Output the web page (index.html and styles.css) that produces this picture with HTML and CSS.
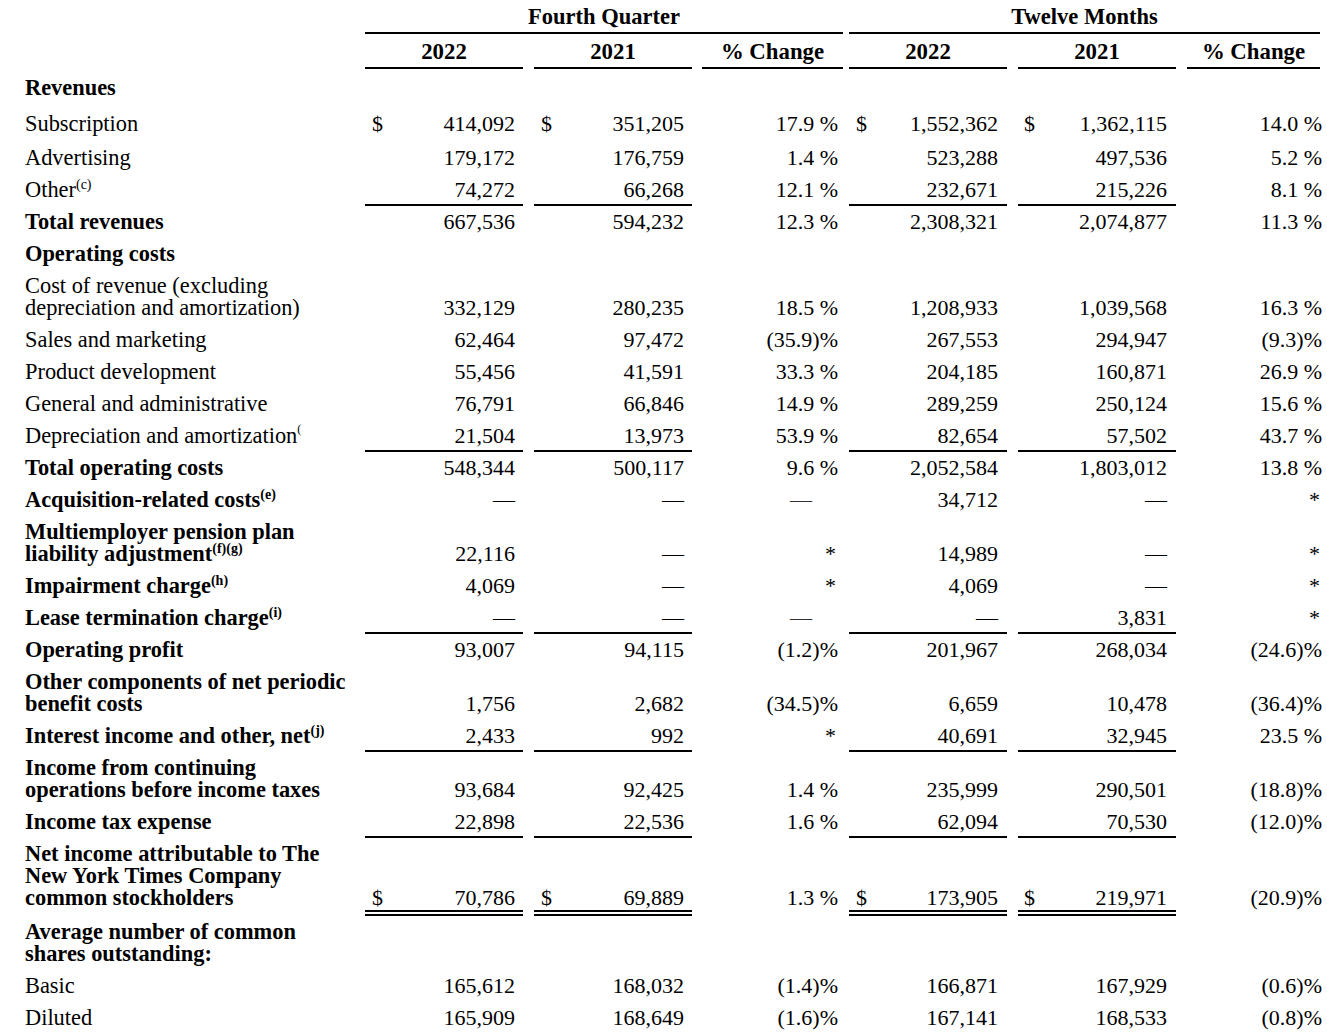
FILE: index.html
```html
<!DOCTYPE html>
<html lang="en">
<head>
<meta charset="utf-8">
<title>Statement of Operations</title>
<link rel="stylesheet" href="styles.css">
</head>
<body>
<div class="sheet">
  <div class="hrow1">
    <div></div>
    <div class="hq">Fourth Quarter</div>
    <div class="ht">Twelve Months</div>
  </div>
  <div class="r hrow2">
    <div></div>
    <div>2022</div><div>2021</div><div>% Change</div>
    <div>2022</div><div>2021</div><div>% Change</div>
  </div>

  <div class="r rev"><div class="lb b">Revenues</div><div></div><div></div><div></div><div></div><div></div><div></div></div>
  <div class="r sub">
    <div class="lb">Subscription</div>
    <div class="n"><span class="d">$</span>414,092</div>
    <div class="n"><span class="d">$</span>351,205</div>
    <div class="n">17.9 %</div>
    <div class="n"><span class="d">$</span>1,552,362</div>
    <div class="n"><span class="d">$</span>1,362,115</div>
    <div class="n"><span class="p">14.0 %</span></div>
  </div>
  <div class="r adv">
    <div class="lb">Advertising</div>
    <div class="n">179,172</div><div class="n">176,759</div><div class="n">1.4 %</div>
    <div class="n">523,288</div><div class="n">497,536</div><div class="n"><span class="p">5.2 %</span></div>
  </div>
  <div class="r">
    <div class="lb">Other<sup>(c)</sup></div>
    <div class="n u">74,272</div><div class="n u">66,268</div><div class="n">12.1 %</div>
    <div class="n u">232,671</div><div class="n u">215,226</div><div class="n"><span class="p">8.1 %</span></div>
  </div>
  <div class="r">
    <div class="lb b">Total revenues</div>
    <div class="n">667,536</div><div class="n">594,232</div><div class="n">12.3 %</div>
    <div class="n">2,308,321</div><div class="n">2,074,877</div><div class="n"><span class="p">11.3 %</span></div>
  </div>
  <div class="r"><div class="lb b">Operating costs</div><div></div><div></div><div></div><div></div><div></div><div></div></div>
  <div class="r">
    <div class="lb">Cost of revenue (excluding<br>depreciation and amortization)</div>
    <div class="n">332,129</div><div class="n">280,235</div><div class="n">18.5 %</div>
    <div class="n">1,208,933</div><div class="n">1,039,568</div><div class="n"><span class="p">16.3 %</span></div>
  </div>
  <div class="r">
    <div class="lb">Sales and marketing</div>
    <div class="n">62,464</div><div class="n">97,472</div><div class="n">(35.9)%</div>
    <div class="n">267,553</div><div class="n">294,947</div><div class="n"><span class="p">(9.3)%</span></div>
  </div>
  <div class="r">
    <div class="lb">Product development</div>
    <div class="n">55,456</div><div class="n">41,591</div><div class="n">33.3 %</div>
    <div class="n">204,185</div><div class="n">160,871</div><div class="n"><span class="p">26.9 %</span></div>
  </div>
  <div class="r">
    <div class="lb">General and administrative</div>
    <div class="n">76,791</div><div class="n">66,846</div><div class="n">14.9 %</div>
    <div class="n">289,259</div><div class="n">250,124</div><div class="n"><span class="p">15.6 %</span></div>
  </div>
  <div class="r">
    <div class="lb">Depreciation and amortization<sup class="tick">(</sup></div>
    <div class="n u">21,504</div><div class="n u">13,973</div><div class="n">53.9 %</div>
    <div class="n u">82,654</div><div class="n u">57,502</div><div class="n"><span class="p">43.7 %</span></div>
  </div>
  <div class="r">
    <div class="lb b">Total operating costs</div>
    <div class="n">548,344</div><div class="n">500,117</div><div class="n">9.6 %</div>
    <div class="n">2,052,584</div><div class="n">1,803,012</div><div class="n"><span class="p">13.8 %</span></div>
  </div>
  <div class="r">
    <div class="lb b">Acquisition-related costs<sup>(e)</sup></div>
    <div class="n">—</div><div class="n">—</div><div class="n"><span class="pd">—</span></div>
    <div class="n">34,712</div><div class="n">—</div><div class="n"><span class="ast">*</span></div>
  </div>
  <div class="r">
    <div class="lb b">Multiemployer pension plan<br>liability adjustment<sup>(f)(g)</sup></div>
    <div class="n">22,116</div><div class="n">—</div><div class="n"><span class="a3">*</span></div>
    <div class="n">14,989</div><div class="n">—</div><div class="n"><span class="ast">*</span></div>
  </div>
  <div class="r">
    <div class="lb b">Impairment charge<sup>(h)</sup></div>
    <div class="n">4,069</div><div class="n">—</div><div class="n"><span class="a3">*</span></div>
    <div class="n">4,069</div><div class="n">—</div><div class="n"><span class="ast">*</span></div>
  </div>
  <div class="r">
    <div class="lb b">Lease termination charge<sup>(i)</sup></div>
    <div class="n u">—</div><div class="n u">—</div><div class="n"><span class="pd">—</span></div>
    <div class="n u">—</div><div class="n u">3,831</div><div class="n"><span class="ast">*</span></div>
  </div>
  <div class="r">
    <div class="lb b">Operating profit</div>
    <div class="n">93,007</div><div class="n">94,115</div><div class="n">(1.2)%</div>
    <div class="n">201,967</div><div class="n">268,034</div><div class="n"><span class="p">(24.6)%</span></div>
  </div>
  <div class="r">
    <div class="lb b">Other components of net periodic<br>benefit costs</div>
    <div class="n">1,756</div><div class="n">2,682</div><div class="n">(34.5)%</div>
    <div class="n">6,659</div><div class="n">10,478</div><div class="n"><span class="p">(36.4)%</span></div>
  </div>
  <div class="r">
    <div class="lb b">Interest income and other, net<sup>(j)</sup></div>
    <div class="n u">2,433</div><div class="n u">992</div><div class="n"><span class="a3">*</span></div>
    <div class="n u">40,691</div><div class="n u">32,945</div><div class="n"><span class="p">23.5 %</span></div>
  </div>
  <div class="r">
    <div class="lb b">Income from continuing<br>operations before income taxes</div>
    <div class="n">93,684</div><div class="n">92,425</div><div class="n">1.4 %</div>
    <div class="n">235,999</div><div class="n">290,501</div><div class="n"><span class="p">(18.8)%</span></div>
  </div>
  <div class="r">
    <div class="lb b">Income tax expense</div>
    <div class="n u">22,898</div><div class="n u">22,536</div><div class="n">1.6 %</div>
    <div class="n u">62,094</div><div class="n u">70,530</div><div class="n"><span class="p">(12.0)%</span></div>
  </div>
  <div class="r net">
    <div class="lb b">Net income attributable to The<br>New York Times Company<br>common stockholders</div>
    <div class="n uu"><span class="d">$</span>70,786</div><div class="n uu"><span class="d">$</span>69,889</div><div class="n">1.3 %</div>
    <div class="n uu"><span class="d">$</span>173,905</div><div class="n uu"><span class="d">$</span>219,971</div><div class="n"><span class="p">(20.9)%</span></div>
  </div>
  <div class="r">
    <div class="lb b">Average number of common<br>shares outstanding:</div>
    <div></div><div></div><div></div><div></div><div></div><div></div>
  </div>
  <div class="r">
    <div class="lb">Basic</div>
    <div class="n">165,612</div><div class="n">168,032</div><div class="n">(1.4)%</div>
    <div class="n">166,871</div><div class="n">167,929</div><div class="n"><span class="p">(0.6)%</span></div>
  </div>
  <div class="r">
    <div class="lb">Diluted</div>
    <div class="n">165,909</div><div class="n">168,649</div><div class="n">(1.6)%</div>
    <div class="n">167,141</div><div class="n">168,533</div><div class="n"><span class="p">(0.8)%</span></div>
  </div>
</div>
</body>
</html>
```

FILE: styles.css
```css
html, body {
  margin: 0;
  padding: 0;
  background: #ffffff;
}

body {
  font-family: "Liberation Serif", "Times New Roman", serif;
  font-size: 22px;
  color: #000000;
}

.sheet {
  padding-left: 25px;
  width: 1302px;
}

.hrow1,
.r {
  display: grid;
  grid-template-columns: 340px 158px 169px 151px 164px 169px 144px;
}

.hrow1 > div,
.r > div {
  line-height: 22px;
  padding: 5px 0 5px 0;
}

.hrow1 > div {
  padding-top: 6px;
  padding-bottom: 4px;
  font-weight: bold;
  font-size: 22.5px;
  text-align: center;
}

.hrow1 .hq {
  grid-column: 2 / span 3;
  border-bottom: 2px solid #000;
}

.hrow1 .ht {
  grid-column: 5 / span 3;
  margin-left: 6px;
  border-bottom: 2px solid #000;
}

.r > :nth-child(3) { margin-left: 11px; }
.r > :nth-child(4) { margin-left: 10px; }
.r > :nth-child(5) { margin-left: 6px; }
.r > :nth-child(6) { margin-left: 11px; }
.r > :nth-child(7) { margin-left: 11px; }

.hrow2 > div {
  padding-top: 7px;
  padding-bottom: 4px;
  font-weight: bold;
  font-size: 22.8px;
  text-align: center;
}

.hrow2 > div:not(:first-child) {
  border-bottom: 2px solid #000;
}

.rev > div {
  padding-top: 8px;
  padding-bottom: 5px;
}

.sub > div {
  padding-top: 9px;
}

.adv > div {
  padding-top: 7px;
}

.lb {
  white-space: nowrap;
  font-size: 22.4px;
}

.b {
  font-weight: bold;
}

.n {
  display: flex;
  align-items: flex-end;
  justify-content: flex-end;
  white-space: nowrap;
  color: #000;
}

.r > .n:nth-child(2) { padding-left: 7px; padding-right: 8px; }
.r > .n:nth-child(3) { padding-left: 7px; padding-right: 8px; }
.r > .n:nth-child(4) { padding-right: 5px; }
.r > .n:nth-child(5) { padding-left: 7px; padding-right: 9px; }
.r > .n:nth-child(6) { padding-left: 6px; padding-right: 9px; }
.r > .n:nth-child(7) { padding-right: 0; }

.d {
  margin-right: auto;
}

.p {
  margin-right: -2px;
}

.pd {
  margin-right: 26px;
  color: #333;
}

.a3 {
  margin-right: 2px;
}

.ast {
  margin-right: 0;
}

.r > .u {
  border-bottom: 2px solid #000;
  padding-bottom: 3px;
}

.net > div {
  padding-bottom: 7px;
}

.r.net > .uu {
  border-bottom: 6px double #000;
  padding-bottom: 1px;
}

sup {
  font-size: 14px;
  line-height: 0;
  vertical-align: 8px;
}

sup.tick {
  font-size: 12px;
  vertical-align: 10px;
}
```
